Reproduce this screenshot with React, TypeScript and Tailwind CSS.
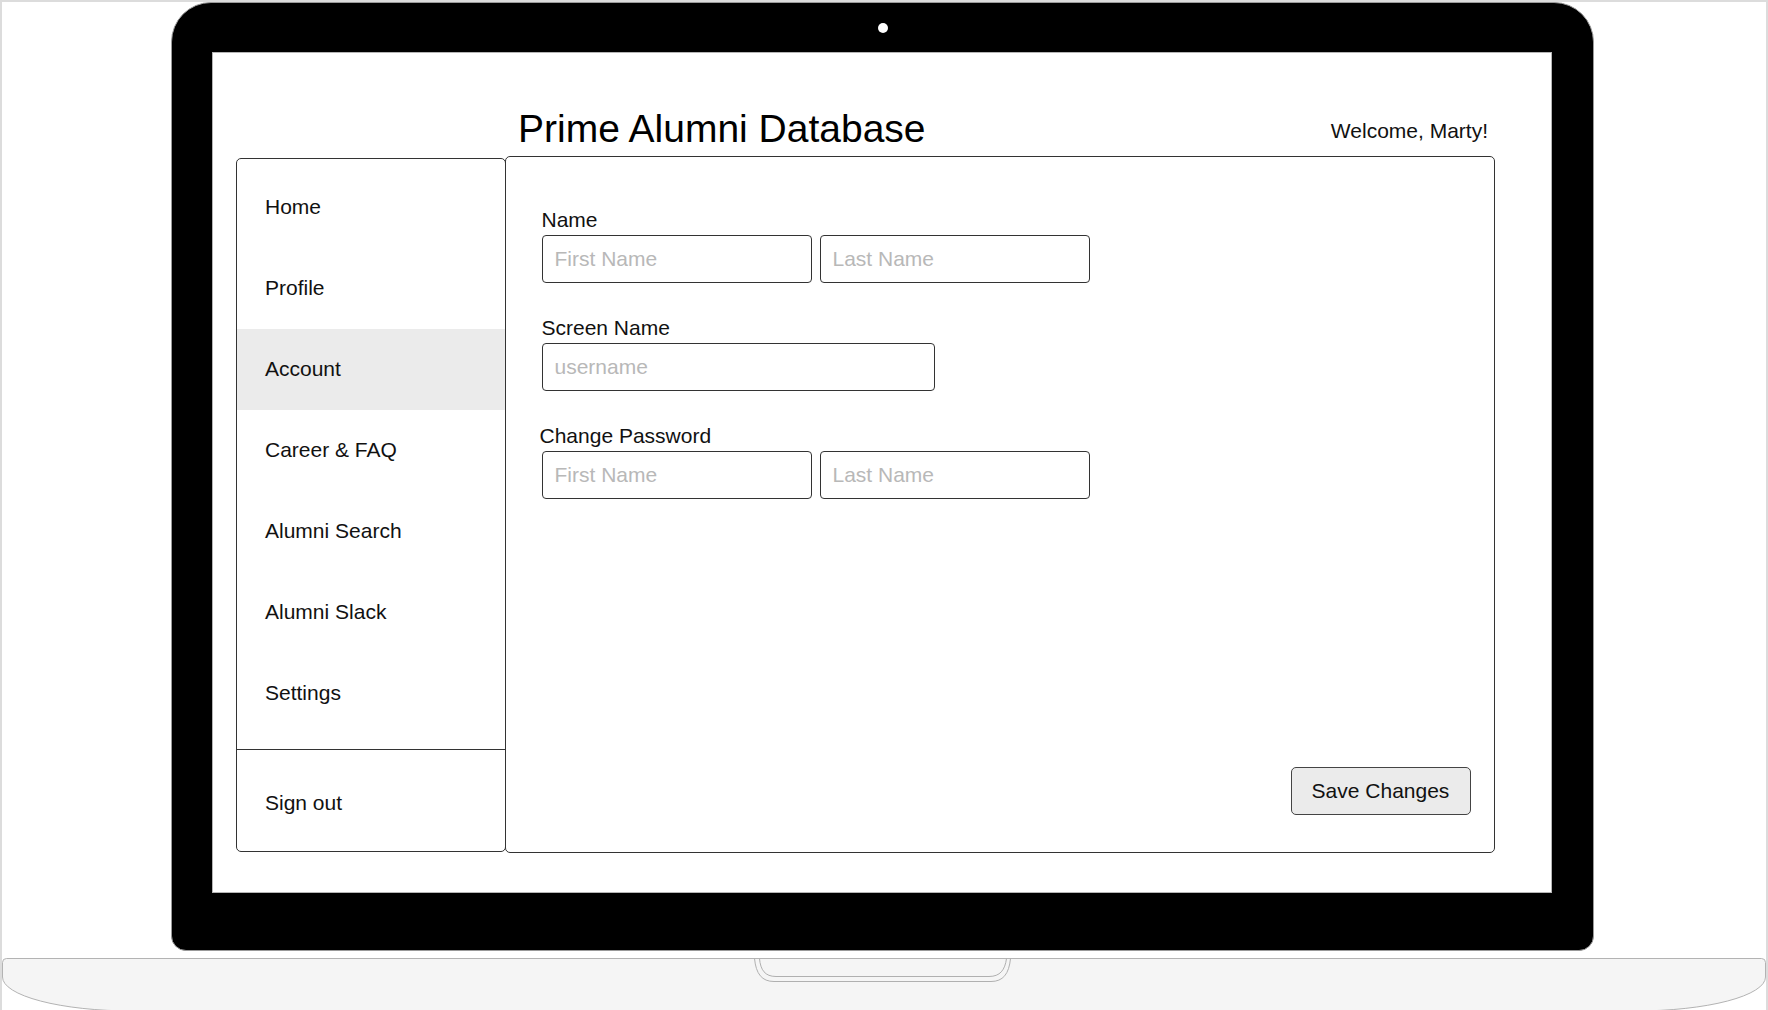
import * as React from "react";

const NAV = ["Home", "Profile", "Account", "Career & FAQ", "Alumni Search", "Alumni Slack", "Settings"];
const ACTIVE = "Account";

function Field({ label, placeholders, wide, shift }: { label: string; placeholders: string[]; wide?: boolean; shift?: boolean }) {
  return (
    <div className="flex flex-col">
      <label className={shift ? "-ml-[2px] h-[24px] text-[21px] leading-[24px] text-[#111]" : "h-[24px] text-[21px] leading-[24px] text-[#111]"}>
        {label}
      </label>
      <div className="mt-[3px] flex gap-[8px]">
        {placeholders.map((p, i) => (
          <input
            key={i}
            placeholder={p}
            className={
              (wide ? "w-[393px]" : "w-[270px]") +
              " h-[48px] rounded-[4px] border-[1.5px] border-[#333] bg-white px-[12px] text-[21px] text-[#111] outline-none placeholder:text-[#b8b8b8]"
            }
          />
        ))}
      </div>
    </div>
  );
}

function LaptopBase() {
  return (
    <svg width="1764" height="52" viewBox="0 0 1764 52" className="mt-[7px] block shrink-0">
      <path
        d="M4.5,0.5 L1759.5,0.5 Q1763.5,0.5 1763.5,4.5 L1763.5,19 A130 34 0 0 1 1633.5,53 L130.5,53 A130 34 0 0 1 0.5,19 L0.5,4.5 Q0.5,0.5 4.5,0.5 Z"
        fill="#f5f5f5"
        stroke="#b3b3b3"
        strokeWidth="1"
      />
      <path
        d="M752.5,0.5 C754,16 760,23.5 772,23.5 L989,23.5 C1001,23.5 1007,16 1008.5,0.5"
        fill="none"
        stroke="#b0b0b0"
        strokeWidth="1"
      />
      <path
        d="M757.5,0.5 C758.5,12 763,18.5 774,18.5 L987,18.5 C998,18.5 1003,12 1004.5,0.5"
        fill="none"
        stroke="#b0b0b0"
        strokeWidth="1"
      />
    </svg>
  );
}

export default function App() {
  return (
    <div className="flex h-[1010px] w-[1768px] flex-col overflow-hidden border-2 border-b-0 border-[#dcdcdc] bg-white font-['Liberation_Sans',Arial,sans-serif]">
      {/* laptop lid */}
      <div className="ml-[169px] flex h-[949px] w-[1423px] shrink-0 flex-col rounded-t-[40px] rounded-b-[15px] border border-[#9a9a9a] bg-black">
        <div className="mx-auto mt-[20px] h-[10px] w-[10px] rounded-full bg-white" />
        <div className="ml-[40px] mt-[19px] flex h-[841px] w-[1340px] flex-col border border-[#b5b5b5] bg-white">
          {/* header */}
          <div className="mt-[54px] flex h-[43px] items-start justify-between">
            <h1 className="ml-[305px] text-[39px] font-normal leading-[43px] text-black">Prime Alumni Database</h1>
            <div className="mr-[63px] mt-[12px] text-[21px] leading-[24px] text-[#111]">Welcome, Marty!</div>
          </div>

          {/* main */}
          <div className="mt-[6px] flex items-start">
            <aside className="ml-[23px] mt-[2px] flex h-[694px] w-[270px] flex-col rounded-[5px] border-[1.5px] border-[#333] bg-white">
              <nav className="flex flex-1 flex-col pt-[7.5px]">
                {NAV.map((n) => (
                  <div
                    key={n}
                    className={
                      "flex h-[81px] items-center pl-[28px] text-[21px] leading-[24px] text-[#111]" +
                      (n === ACTIVE ? " bg-[#ebebeb]" : "")
                    }
                  >
                    {n}
                  </div>
                ))}
              </nav>
              <div className="h-[102px] border-t-[1.5px] border-[#333] pl-[28px] pt-[41px] text-[21px] leading-[24px] text-[#111]">
                Sign out
              </div>
            </aside>

            <section className="-ml-[1.5px] flex h-[697px] w-[990.5px] flex-col rounded-[5px] border-[1.5px] border-[#333] bg-white">
              <div className="ml-[36px] mt-[51px] flex flex-col gap-[33px]">
                <Field label="Name" placeholders={["First Name", "Last Name"]} />
                <Field label="Screen Name" placeholders={["username"]} wide />
                <Field label="Change Password" placeholders={["First Name", "Last Name"]} shift />
              </div>
              <div className="flex-1" />
              <button className="mb-[37.5px] mr-[23.5px] h-[48px] w-[180px] self-end rounded-[5px] border-[1.5px] border-[#444] bg-[#ebebeb] text-[21px] text-[#111]">
                Save Changes
              </button>
            </section>
          </div>
        </div>
      </div>

      <LaptopBase />
    </div>
  );
}
